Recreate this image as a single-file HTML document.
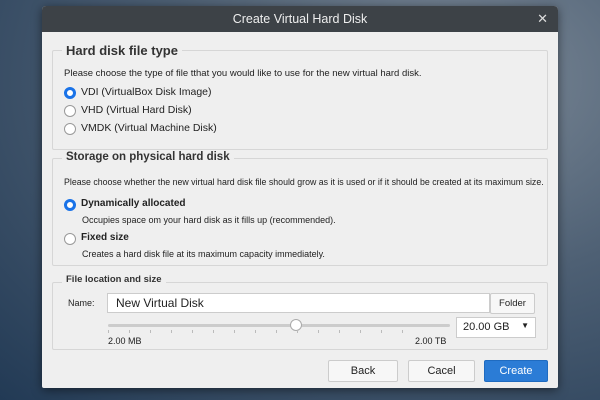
<!DOCTYPE html>
<html><head><style>
*{margin:0;padding:0;box-sizing:border-box}
body{width:600px;height:400px;overflow:hidden;background:radial-gradient(ellipse at 75% 20%,#7d8a98 0%,#4e6074 45%,#223a55 100%);font-family:"Liberation Sans",sans-serif;position:relative;color:#222}
.dlg{position:absolute;left:42px;top:6px;width:516px;height:382px;background:#efefef;border-radius:4px 4px 2px 2px;box-shadow:0 2px 10px rgba(0,0,0,.5);overflow:hidden}
.tb{height:26px;background:#3d4247;color:#eee;font-size:12.5px;text-align:center;line-height:26px}
.x{position:absolute;right:10px;top:0;color:#ddd;font-size:13px;line-height:26px}
.a{position:absolute;white-space:nowrap}
.box{position:absolute;border:1px solid #d6d6d6;border-radius:2px}
.gt{position:absolute;background:#efefef;padding:0 4px;font-weight:bold;color:#333}
.r{position:absolute;width:12px;height:12px;border-radius:50%;border:1px solid #999;background:#fff}
.r.on{border:3px solid #1a73e8}
.btn{position:absolute;height:21px;border:1px solid #ccc;border-radius:2px;background:#f7f7f7;font-size:11px;text-align:center;line-height:19px;color:#222}
</style></head><body>
<div class="dlg">
<div class="tb">Create Virtual Hard Disk</div><div class="x">✕</div>
<div class="box" style="left:10px;top:44px;width:496px;height:100px"></div>
<div class="gt" style="left:20px;top:37px;font-size:13px">Hard disk file type</div>
<div class="a" style="left:22px;top:62px;font-size:9.5px">Please choose the type of file tthat you would like to use for the new virtual hard disk.</div>
<div class="r on" style="left:22px;top:81px"></div><div class="a" style="left:39px;top:80px;font-size:10.5px">VDI (VirtualBox Disk Image)</div>
<div class="r" style="left:22px;top:99px"></div><div class="a" style="left:39px;top:98px;font-size:10.5px">VHD (Virtual Hard Disk)</div>
<div class="r" style="left:22px;top:117px"></div><div class="a" style="left:39px;top:116px;font-size:10.5px">VMDK (Virtual Machine Disk)</div>

<div class="box" style="left:10px;top:152px;width:496px;height:108px"></div>
<div class="gt" style="left:20px;top:145px;font-size:11.5px">Storage on physical hard disk</div>
<div class="a" style="left:22px;top:171px;font-size:8.8px">Please choose whether the new virtual hard disk file should grow as it is used or if it should be created at its maximum size.</div>
<div class="r on" style="left:22px;top:193px"></div><div class="a" style="left:39px;top:192px;font-size:10px;font-weight:bold">Dynamically allocated</div>
<div class="a" style="left:40px;top:209px;font-size:9px">Occupies space om your hard disk as it fills up (recommended).</div>
<div class="r" style="left:22px;top:227px"></div><div class="a" style="left:39px;top:226px;font-size:10px;font-weight:bold">Fixed size</div>
<div class="a" style="left:40px;top:243px;font-size:9px">Creates a hard disk file at its maximum capacity immediately.</div>

<div class="box" style="left:10px;top:276px;width:496px;height:68px"></div>
<div class="gt" style="left:20px;top:268px;font-size:9.5px">File location and size</div>
<div class="a" style="left:26px;top:292px;font-size:9px">Name:</div>
<div class="a" style="left:65px;top:287px;width:383px;height:20px;background:#fff;border:1px solid #ccc;font-size:12px;padding:2px 8px">New Virtual Disk</div>
<div class="btn" style="left:448px;top:287px;width:45px;height:21px;font-size:9.5px">Folder</div>
<div class="a" style="left:66px;top:318px;width:342px;height:3px;background:#ccc;border-radius:2px"></div>
<div class="a" style="left:248px;top:313px;width:12px;height:12px;border-radius:50%;background:#fff;border:1px solid #aaa"></div>
<div class="a" style="left:66px;top:324px;width:300px;height:3px;background:repeating-linear-gradient(90deg,#bbb 0 1px,transparent 1px 21px)"></div>
<div class="a" style="left:66px;top:330px;font-size:9px">2.00 MB</div>
<div class="a" style="left:373px;top:330px;font-size:9px">2.00 TB</div>
<div class="a" style="left:414px;top:311px;width:80px;height:21px;background:#fff;border:1px solid #ccc;font-size:11px;padding:3px 6px">20.00 GB<span style="position:absolute;right:6px;top:3px;font-size:8px">▼</span></div>

<div class="btn" style="left:286px;top:354px;width:70px;height:22px;line-height:20px">Back</div>
<div class="btn" style="left:366px;top:354px;width:67px;height:22px;line-height:20px">Cacel</div>
<div class="btn" style="left:442px;top:354px;width:64px;height:22px;line-height:20px;background:#2b7cd6;border-color:#1f6bc0;color:#fff">Create</div>
</div>
</body></html>
